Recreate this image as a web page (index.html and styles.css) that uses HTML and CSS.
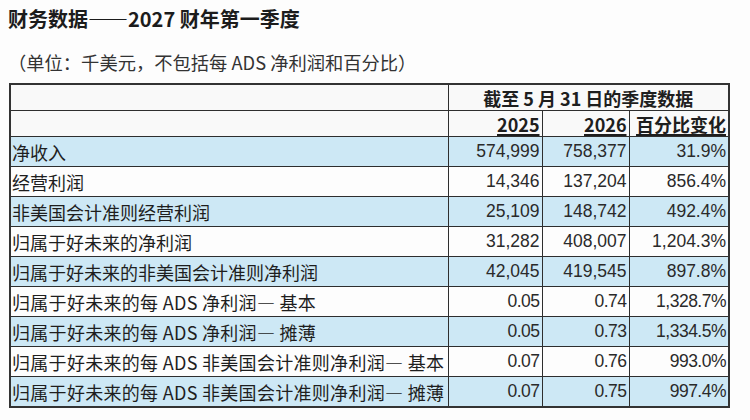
FILE: index.html
```html
<!DOCTYPE html>
<html lang="zh-CN">
<head>
<meta charset="utf-8">
<title>财务数据——2027 财年第一季度</title>
<link rel="stylesheet" href="styles.css">
</head>
<body>
<div class="page">
  <h1 class="title">财务数据——2027 财年第一季度</h1>
  <p class="note">（单位：千美元，不包括每 ADS 净利润和百分比）</p>
  <table class="fin">
    <colgroup>
      <col class="c-label"><col class="c-num1"><col class="c-num2"><col class="c-pct">
    </colgroup>
    <thead>
      <tr class="h1">
        <th></th>
        <th colspan="3" class="span">截至 5 月 31 日的季度数据</th>
      </tr>
      <tr class="h2">
        <th></th>
        <th class="r"><u>2025</u></th>
        <th class="r"><u>2026</u></th>
        <th class="r"><u>百分比变化</u></th>
      </tr>
    </thead>
    <tbody>
      <tr class="blue"><td class="lbl">净收入</td><td>574,999</td><td>758,377</td><td>31.9%</td></tr>
      <tr><td class="lbl">经营利润</td><td>14,346</td><td>137,204</td><td>856.4%</td></tr>
      <tr class="blue"><td class="lbl">非美国会计准则经营利润</td><td>25,109</td><td>148,742</td><td>492.4%</td></tr>
      <tr><td class="lbl">归属于好未来的净利润</td><td>31,282</td><td>408,007</td><td>1,204.3%</td></tr>
      <tr class="blue"><td class="lbl">归属于好未来的非美国会计准则净利润</td><td>42,045</td><td>419,545</td><td>897.8%</td></tr>
      <tr class="eps"><td class="lbl">归属于好未来的每 ADS 净利润— 基本</td><td>0.05</td><td>0.74</td><td>1,328.7%</td></tr>
      <tr class="blue eps"><td class="lbl">归属于好未来的每 ADS 净利润— 摊薄</td><td>0.05</td><td>0.73</td><td>1,334.5%</td></tr>
      <tr class="eps"><td class="lbl">归属于好未来的每 ADS 非美国会计准则净利润— 基本</td><td>0.07</td><td>0.76</td><td>993.0%</td></tr>
      <tr class="blue eps"><td class="lbl">归属于好未来的每 ADS 非美国会计准则净利润— 摊薄</td><td>0.07</td><td>0.75</td><td>997.4%</td></tr>
    </tbody>
  </table>
</div>
</body>
</html>
```

FILE: styles.css
```css
html, body {
  margin: 0;
  padding: 0;
  background: #fdfdfd;
}

.page {
  padding: 8px 0 0 8px;
  font-family: "Noto Sans CJK SC", "Noto Sans", sans-serif;
  color: #222;
}

.title {
  margin: 0;
  font-size: 20px;
  line-height: 22px;
  font-weight: 700;
  color: #1c1c1c;
}

.note {
  margin: 20px 0 0 0;
  font-size: 18.3px;
  line-height: 24px;
  color: #333;
}

.fin {
  margin: 9px 0 0 1px;
  border-collapse: collapse;
  table-layout: fixed;
  width: 719px;
  border: 2px solid #333;
}

.c-label { width: 438px; }
.c-num1 { width: 94px; }
.c-num2 { width: 87px; }
.c-pct { width: 100px; }

.fin th,
.fin td {
  border: 1.5px solid #2e2e2e;
  padding: 0 2px;
  white-space: nowrap;
  overflow: hidden;
}

.fin thead th {
  height: 25px;
  background: #f9f9f9;
  font-size: 18px;
  line-height: 22px;
  font-weight: 700;
  color: #1e1e1e;
}

.fin th.span { text-align: center; }
.fin th.r { text-align: right; }
.fin th.r u { text-underline-offset: 2px; text-decoration-thickness: 1.5px; }

.fin td {
  height: 29px;
  font-family: "Liberation Sans", Arial, sans-serif;
  font-size: 17.5px;
  text-align: right;
  color: #2a2a2a;
  background: #fdfdfd;
}

.fin td.lbl {
  font-family: "Noto Sans CJK SC", "Noto Sans", sans-serif;
  font-size: 18px;
  text-align: left;
  padding-left: 1px;
  color: #1e1e1e;
}

.fin tr.blue td {
  background: #cde8f5;
}

.fin tr.eps td {
  letter-spacing: -0.5px;
}

.fin tr.eps td.lbl {
  letter-spacing: 0.3px;
}
```
